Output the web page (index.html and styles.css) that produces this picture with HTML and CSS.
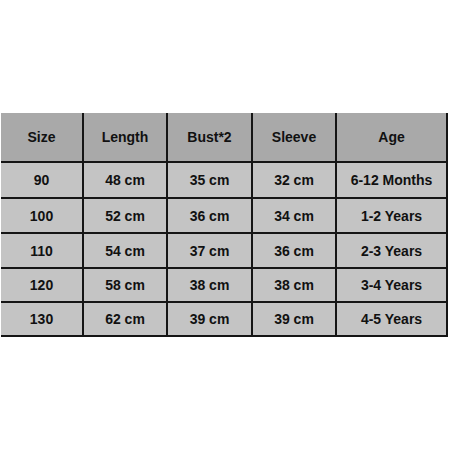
FILE: index.html
```html
<!DOCTYPE html>
<html>
<head>
<meta charset="utf-8">
<link rel="stylesheet" href="styles.css">
</head>
<body>
<div class="chart">
  <div class="cell head">Size</div>
  <div class="cell head">Length</div>
  <div class="cell head">Bust*2</div>
  <div class="cell head">Sleeve</div>
  <div class="cell head">Age</div>

  <div class="cell">90</div>
  <div class="cell">48 cm</div>
  <div class="cell">35 cm</div>
  <div class="cell">32 cm</div>
  <div class="cell">6-12 Months</div>

  <div class="cell">100</div>
  <div class="cell">52 cm</div>
  <div class="cell">36 cm</div>
  <div class="cell">34 cm</div>
  <div class="cell">1-2 Years</div>

  <div class="cell">110</div>
  <div class="cell">54 cm</div>
  <div class="cell">37 cm</div>
  <div class="cell">36 cm</div>
  <div class="cell">2-3 Years</div>

  <div class="cell">120</div>
  <div class="cell">58 cm</div>
  <div class="cell">38 cm</div>
  <div class="cell">38 cm</div>
  <div class="cell">3-4 Years</div>

  <div class="cell">130</div>
  <div class="cell">62 cm</div>
  <div class="cell">39 cm</div>
  <div class="cell">39 cm</div>
  <div class="cell">4-5 Years</div>
</div>
</body>
</html>
```
FILE: styles.css
```css
html, body {
  margin: 0;
  padding: 0;
  background: #ffffff;
}
body {
  width: 450px;
  height: 450px;
  overflow: hidden;
  font-family: "Liberation Sans", Arial, sans-serif;
}
.chart {
  margin: 113px 0 0 1px;
  width: 447px;
  display: grid;
  grid-template-columns: 81px 82px 83px 82px 109px;
  grid-template-rows: 48px 34px 33px 33px 32px 32px;
  gap: 2px;
  padding: 0 2px 2px 0;
  box-sizing: border-box;
  background: #151515;
}
.cell {
  background: #c4c4c4;
  color: #111111;
  font-weight: bold;
  font-size: 14px;
  display: flex;
  align-items: center;
  justify-content: center;
}
.cell.head {
  background: #a9a9a9;
}
```
